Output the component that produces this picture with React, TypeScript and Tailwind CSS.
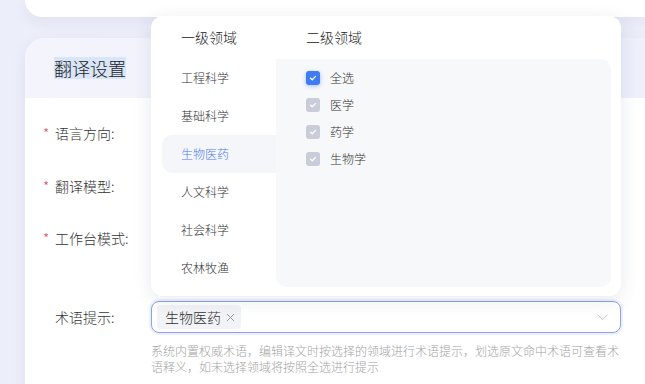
import { useState } from "react";

const primary = ["工程科学", "基础科学", "生物医药", "人文科学", "社会科学", "农林牧渔"];
const secondary = ["全选", "医学", "药学", "生物学"];

function Check({ active }: { active: boolean }) {
  return (
    <span
      className={
        "flex h-[14px] w-[14px] items-center justify-center rounded-[3px] " +
        (active ? "bg-[#3f7cf4] shadow-[0_1px_4px_rgba(63,124,244,0.45)]" : "bg-[#c9ccd9]")
      }
    >
      <svg width="8" height="8" viewBox="0 0 8 8" fill="none">
        <path d="M1.5 4.2 3.3 5.8 6.5 2.4" stroke="white" strokeWidth="1.3" strokeLinecap="round" strokeLinejoin="round" />
      </svg>
    </span>
  );
}

function Label({ text, required }: { text: string; required?: boolean }) {
  return (
    <div className="flex w-[126px] shrink-0 items-center pl-[18px] text-[14px] text-[#333]">
      <span className="w-[12px] text-[#e5484d]">{required ? "*" : ""}</span>
      <span>{text}:</span>
    </div>
  );
}

export default function App() {
  const [picked] = useState("生物医药");

  return (
    <div
      className="relative h-[384px] w-[645px] overflow-hidden bg-[#eceef9] font-light"
      style={{ fontFamily: '"Noto Sans CJK SC", "Noto Sans", sans-serif' }}
    >
      <div className="ml-[25px] h-[17px] rounded-bl-[20px] bg-white shadow-[0_4px_14px_rgba(120,130,190,0.12)]" />

      <div className="ml-[25px] mt-[21px] h-[400px] overflow-hidden rounded-tl-[20px] bg-white shadow-[0_4px_14px_rgba(120,130,190,0.12)]">
        <div className="flex h-[60px] items-center bg-gradient-to-r from-[#f3f4fc] to-[#eef0fb] pl-[29px]">
          <span className="bg-[#d9e5f8] text-[18px] leading-[22px] text-[#222]">翻译设置</span>
        </div>

        <div className="mt-[17px] flex h-9">
          <Label text="语言方向" required />
        </div>
        <div className="mt-[17px] flex h-9">
          <Label text="翻译模型" required />
        </div>
        <div className="mt-[16px] flex h-9">
          <Label text="工作台模式" required />
        </div>
        <div className="mt-[45px] flex h-8">
          <Label text="术语提示" />
          <div className="flex h-8 w-[470px] items-center rounded-[8px] border border-[#8aa1ee] pl-[5px] pr-[12px] shadow-[0_0_0_2px_rgba(138,161,238,0.15)]">
            <span className="flex h-6 items-center rounded-[4px] bg-[#f2f3f6] pl-[8px] pr-[6px] text-[14px] text-[#333]">
              {picked}
              <svg className="ml-[5px]" width="9" height="9" viewBox="0 0 9 9">
                <path d="M1 1 8 8M8 1 1 8" stroke="#999" strokeWidth="1" />
              </svg>
            </span>
            <svg className="ml-auto" width="11" height="7" viewBox="0 0 11 7" fill="none">
              <path d="M.8.8 5.5 5.8 10.2.8" stroke="#c4c4c4" strokeWidth="1" />
            </svg>
          </div>
        </div>
        <p className="ml-[126px] mt-[10px] w-[472px] text-[12px] leading-[16px] text-[#a3a3a3]">
          系统内置权威术语，编辑译文时按选择的领域进行术语提示，划选原文命中术语可查看术语释义，如未选择领域将按照全选进行提示
        </p>
      </div>

      <div className="absolute left-[151px] top-[16px] h-[280px] w-[470px] rounded-[12px] bg-white shadow-[0_4px_18px_rgba(60,70,110,0.12)]">
        <div className="flex h-[43px] items-center text-[14px] text-[#222]">
          <span className="w-[155px] pl-[30px]">一级领域</span>
          <span>二级领域</span>
        </div>
        <div className="flex">
          <div className="ml-[11px] w-[114px]">
            {primary.map((p) => (
              <div
                key={p}
                className={
                  "flex h-[38px] items-center rounded-l-[10px] pl-[19px] text-[12px] " +
                  (p === picked ? "bg-[#f5f6fa] text-[#4f7cf3]" : "text-[#333]")
                }
              >
                {p}
              </div>
            ))}
          </div>
          <div className="mr-[10px] h-[228px] flex-1 rounded-[10px] rounded-tl-none bg-[#f7f8fa] pl-[30px] pt-[5px]">
            {secondary.map((s, i) => (
              <div key={s} className="flex h-[27px] items-center gap-[10px] text-[12px] text-[#333]">
                <Check active={i === 0} />
                {s}
              </div>
            ))}
          </div>
        </div>
      </div>
    </div>
  );
}
